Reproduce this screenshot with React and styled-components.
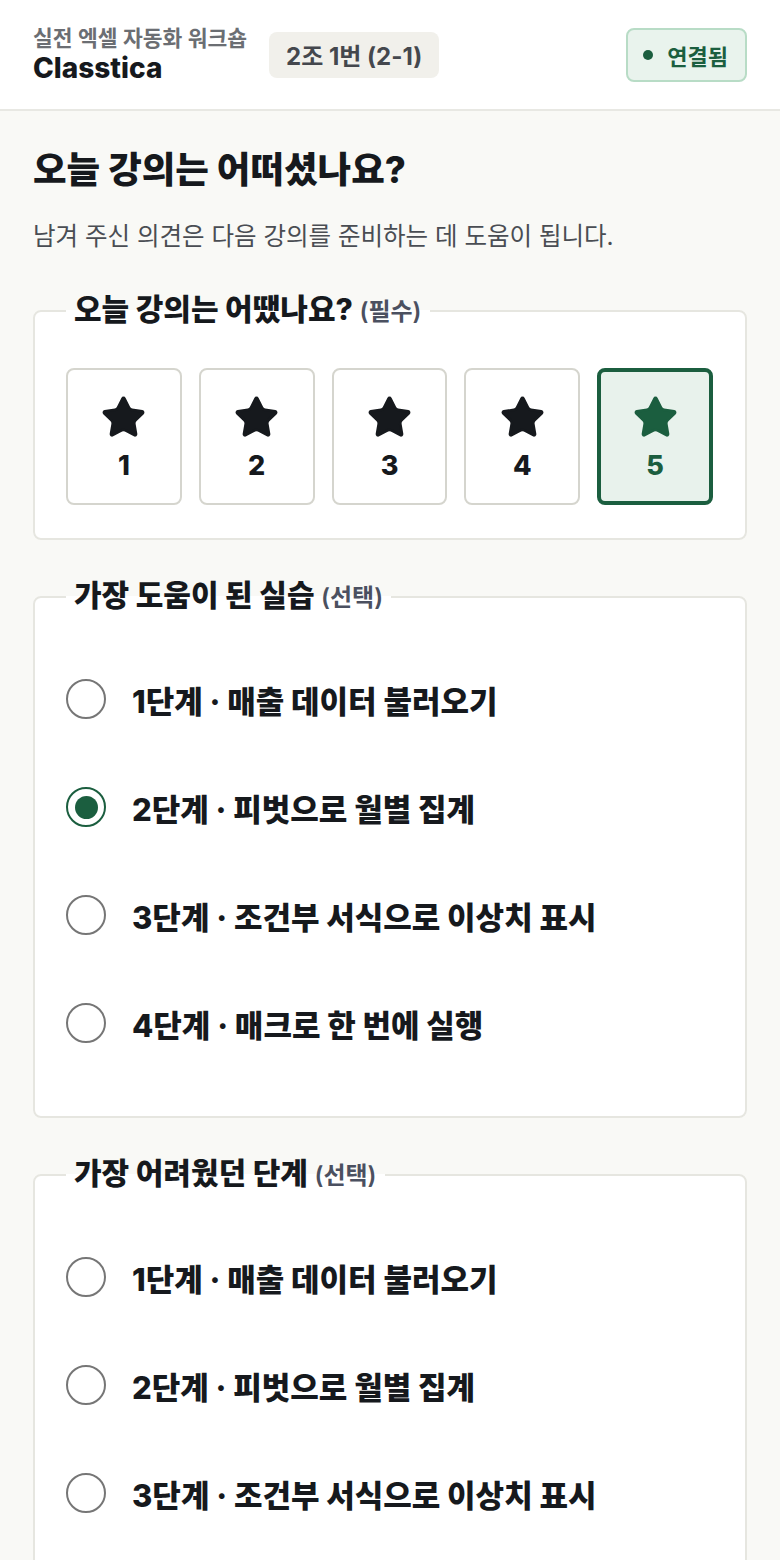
import React, { useState } from "react";
import styled, { createGlobalStyle } from "styled-components";

const GlobalStyle = createGlobalStyle`
  html, body { margin: 0; padding: 0; }
  body {
    background: #f9f9f6;
    font-family: "Inter", "Noto Sans CJK KR", sans-serif;
    color: #16191d;
  }
  * { box-sizing: border-box; }
`;

const Header = styled.header`
  height: 111px;
  background: #ffffff;
  border-bottom: 2px solid #e8e8e3;
  display: flex;
  align-items: center;
  padding: 0 33px;
`;

const Brand = styled.div`
  display: flex;
  flex-direction: column;
`;

const BrandSub = styled.div`
  font-size: 21.5px;
  font-weight: 600;
  color: #6b6e73;
  line-height: 26px;
`;

const BrandName = styled.div`
  font-size: 28px;
  font-weight: 800;
  color: #16191d;
  line-height: 34px;
`;

const GroupBadge = styled.div`
  margin-left: 22px;
  height: 46px;
  padding: 0 17px;
  display: flex;
  align-items: center;
  background: #f1f0eb;
  border-radius: 8px;
  font-size: 24px;
  font-weight: 700;
  color: #44474d;
`;

const Status = styled.div`
  margin-left: auto;
  height: 54px;
  padding: 0 17px 0 15px;
  display: flex;
  align-items: center;
  gap: 14px;
  background: #e9f3ed;
  border: 2px solid #b8dcc6;
  border-radius: 8px;
  font-size: 22px;
  font-weight: 700;
  color: #1b5e3f;
`;

const Dot = styled.span`
  width: 10px;
  height: 10px;
  border-radius: 50%;
  background: #1b5e3f;
`;

const Main = styled.main`
  padding: 35px 33px 40px;
  display: flex;
  flex-direction: column;
`;

const Title = styled.h1`
  margin: 0;
  font-size: 36.5px;
  font-weight: 800;
  line-height: 48px;
`;

const Lead = styled.p`
  margin: 25px 0 0;
  font-size: 24.5px;
  line-height: 34px;
  color: #4a4d53;
`;

const Sections = styled.div`
  margin-top: 36px;
  display: flex;
  flex-direction: column;
  gap: 35px;
`;

const Fieldset = styled.fieldset`
  margin: 0;
  border: 2px solid #e6e6e0;
  border-radius: 8px;
  background: #ffffff;
  padding: 0 32px 33px 31px;
  min-width: 0;
`;

const Legend = styled.legend`
  padding: 0 8px;
  font-size: 30px;
  font-weight: 800;
  line-height: 40px;
  color: #16191d;
`;

const Hint = styled.span`
  font-size: 24px;
  font-weight: 600;
  color: #4b5060;
`;

const RatingGrid = styled.div`
  margin-top: 36px;
  display: grid;
  grid-template-columns: repeat(5, 1fr);
  gap: 17px;
`;

const RateButton = styled.button`
  height: 137px;
  border-radius: 8px;
  border: ${(p) => (p.$active ? "4px solid #1b5e3f" : "2px solid #d5d5ce")};
  background: ${(p) => (p.$active ? "#e8f2ec" : "#ffffff")};
  color: ${(p) => (p.$active ? "#1b5e3f" : "#16191d")};
  display: flex;
  flex-direction: column;
  align-items: center;
  justify-content: center;
  gap: 9px;
  padding: 0;
  font-family: inherit;
  font-size: 27px;
  font-weight: 800;
  line-height: 32px;
  cursor: pointer;
  & svg { margin-top: 2px; }
`;

const OptionList = styled.div`
  padding: 27px 0 6px;
  display: flex;
  flex-direction: column;
`;

const Option = styled.label`
  height: 108px;
  display: flex;
  align-items: center;
  gap: 26px;
  cursor: pointer;
  font-size: 31px;
  font-weight: 800;
  color: #16191d;
`;

const Radio = styled.span`
  flex: none;
  width: 40px;
  height: 40px;
  border-radius: 50%;
  border: 2px solid ${(p) => (p.$checked ? "#1b5e3f" : "#767676")};
  background: #ffffff;
  display: flex;
  align-items: center;
  justify-content: center;
  &::after {
    content: "";
    width: 23px;
    height: 23px;
    border-radius: 50%;
    background: ${(p) => (p.$checked ? "#1b5e3f" : "transparent")};
  }
`;

const StarIcon = () => (
  <svg width="47" height="47" viewBox="0 0 24 24" fill="currentColor" stroke="currentColor" strokeWidth="1.4" strokeLinejoin="round" strokeLinecap="round">
    <path d="M11.525 2.295a.53.53 0 0 1 .95 0l2.31 4.679a2.123 2.123 0 0 0 1.595 1.16l5.166.756a.53.53 0 0 1 .294.904l-3.736 3.638a2.123 2.123 0 0 0-.611 1.878l.882 5.14a.53.53 0 0 1-.771.56l-4.618-2.428a2.122 2.122 0 0 0-1.973 0L6.396 21.01a.53.53 0 0 1-.77-.56l.881-5.139a2.122 2.122 0 0 0-.611-1.879L2.16 9.795a.53.53 0 0 1 .294-.906l5.165-.755a2.122 2.122 0 0 0 1.597-1.160z" />
  </svg>
);

const steps = [
  "1단계 · 매출 데이터 불러오기",
  "2단계 · 피벗으로 월별 집계",
  "3단계 · 조건부 서식으로 이상치 표시",
  "4단계 · 매크로 한 번에 실행",
];

function RadioGroup({ title, value, onChange }) {
  return (
    <Fieldset>
      <Legend>
        {title} <Hint>(선택)</Hint>
      </Legend>
      <OptionList>
        {steps.map((s, i) => (
          <Option key={s} onClick={() => onChange(i)}>
            <Radio $checked={value === i} />
            {s}
          </Option>
        ))}
      </OptionList>
    </Fieldset>
  );
}

export default function App() {
  const [rating, setRating] = useState(5);
  const [helpful, setHelpful] = useState(1);
  const [hard, setHard] = useState(-1);

  return (
    <>
      <GlobalStyle />
      <Header>
        <Brand>
          <BrandSub>실전 엑셀 자동화 워크숍</BrandSub>
          <BrandName>Classtica</BrandName>
        </Brand>
        <GroupBadge>2조 1번 (2-1)</GroupBadge>
        <Status>
          <Dot />
          연결됨
        </Status>
      </Header>
      <Main>
        <Title>오늘 강의는 어떠셨나요?</Title>
        <Lead>남겨 주신 의견은 다음 강의를 준비하는 데 도움이 됩니다.</Lead>
        <Sections>
          <Fieldset>
            <Legend>
              오늘 강의는 어땠나요? <Hint>(필수)</Hint>
            </Legend>
            <RatingGrid>
              {[1, 2, 3, 4, 5].map((n) => (
                <RateButton key={n} $active={rating === n} onClick={() => setRating(n)}>
                  <StarIcon />
                  {n}
                </RateButton>
              ))}
            </RatingGrid>
          </Fieldset>
          <RadioGroup title="가장 도움이 된 실습" value={helpful} onChange={setHelpful} />
          <RadioGroup title="가장 어려웠던 단계" value={hard} onChange={setHard} />
        </Sections>
      </Main>
    </>
  );
}
